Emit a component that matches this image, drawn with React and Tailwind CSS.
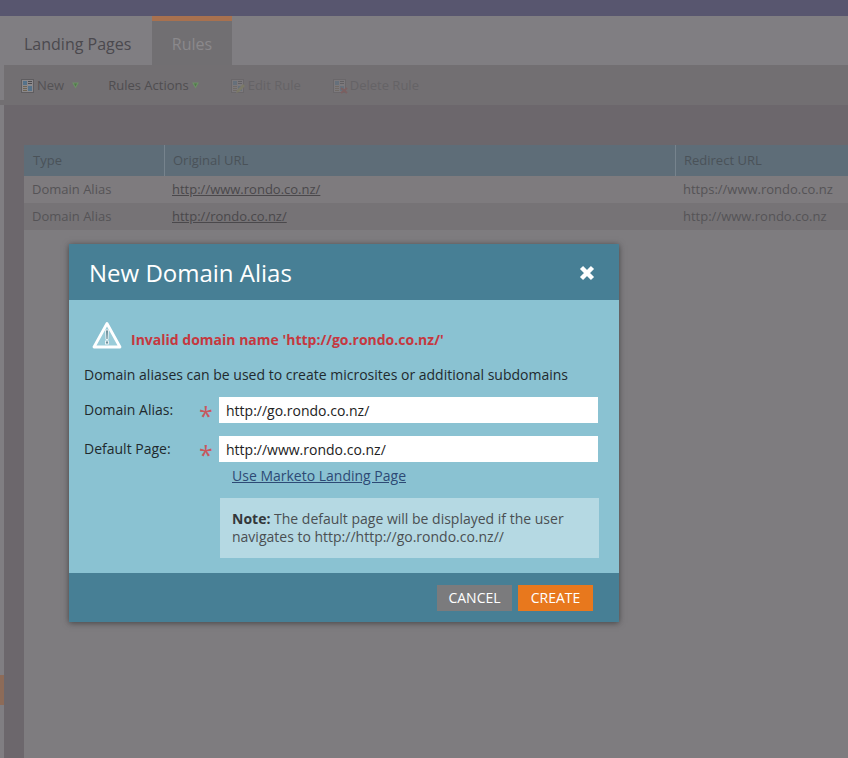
import React from 'react';

const font = { fontFamily: '"Open Sans", sans-serif' };

function DocIcon({ variant, dim }) {
  return (
    <svg width="15" height="16" viewBox="0 0 15 16" className={dim ? 'opacity-40' : ''}>
      <rect x="0.5" y="1.5" width="12" height="13" fill="#8b898c" stroke="#5f5d60" />
      <rect x="2" y="3" width="4" height="4" fill="#55728a" />
      <rect x="7" y="3" width="4" height="1" fill="#4c4a4d" />
      <rect x="7" y="5" width="4" height="1" fill="#4c4a4d" />
      <rect x="2" y="8" width="4" height="1" fill="#6f6452" />
      <rect x="2" y="10" width="4" height="1" fill="#6f6452" />
      <rect x="2" y="12" width="4" height="1" fill="#6f6452" />
      <rect x="7" y="8" width="4" height="5" fill="#55728a" />
      {variant === 'edit' && <path d="M5 15l1-3 6-6 2 2-6 6z" fill="#8a8a58" />}
      {variant === 'delete' && <path d="M8 10l6 5M14 10l-6 5" stroke="#8a4a4a" strokeWidth="2" />}
    </svg>
  );
}

function Caret() {
  return (
    <svg width="7" height="7" viewBox="0 0 7 7" className="shrink-0">
      <path d="M0 0.5h7L3.5 6.5z" fill="#6d8f66" />
      <path d="M2 1.5h3L3.5 4.5z" fill="#4f7a48" />
    </svg>
  );
}

function TableRow({ type, url, redirect, className }) {
  return (
    <div className={`grid grid-cols-[141px_510px_1fr] items-center text-[13px] text-[#555356] ${className}`}>
      <span className="pl-2">{type}</span>
      <a className="pl-[7px] underline text-[#4a484b]">{url}</a>
      <span className="pl-2">{redirect}</span>
    </div>
  );
}

function Field({ label, value }) {
  return (
    <div className="flex items-start h-[26px]">
      <label className="w-[114px] shrink-0 pt-[2px] text-[14px] leading-[22px] text-[#1f2a2e]">{label}</label>
      <span className="w-[21px] shrink-0 h-[26px] pt-[5px] pl-[1px] text-[25px] leading-[26px] text-[#c7585d]">*</span>
      <input
        readOnly
        value={value}
        className="w-[379px] h-[26px] bg-white px-[7px] text-[14px] text-[#222] outline-none"
        style={font}
      />
    </div>
  );
}

export default function App() {
  return (
    <div className="relative h-[758px] w-[848px] overflow-hidden flex flex-col bg-[#7e7c7f]" style={font}>
      <div className="h-4 shrink-0 bg-[#58566f]" />

      {/* Tabs */}
      <div className="h-[49px] shrink-0 flex pl-1 bg-[#807e82]">
        <div className="w-[148px] pl-5 pt-[7px] flex items-center text-[16px] text-[#4b494e]">Landing Pages</div>
        <div className="w-[80px] flex flex-col bg-[#716f72]">
          <div className="h-[5px] bg-[#a8714f]" />
          <div className="flex-1 flex items-center justify-center pt-[2px] text-[16px] text-[#8b898c]">Rules</div>
        </div>
      </div>

      {/* Toolbar */}
      <div className="h-[40px] shrink-0 flex">
        <div className="w-1 flex flex-col bg-[#807e82]">
          <div className="h-[35px]" />
          <div className="h-[5px] bg-[#726f72]" />
        </div>
        <div className="flex-1 flex items-center pl-[17px] pt-[1px] text-[13px] bg-[#726f72]">
          <DocIcon />
          <span className="ml-[1px] text-[#545255]">New</span>
          <span className="ml-2"><Caret /></span>
          <span className="ml-[29px] text-[#4f4d50]">Rules Actions</span>
          <span className="ml-[3px]"><Caret /></span>
          <span className="ml-[32px]"><DocIcon variant="edit" dim /></span>
          <span className="ml-[2px] text-[#656366]">Edit Rule</span>
          <span className="ml-[32px]"><DocIcon variant="delete" dim /></span>
          <span className="ml-[2px] text-[#656366]">Delete Rule</span>
        </div>
      </div>

      {/* Main area */}
      <div className="flex-1 flex">
        <div className="w-1 shrink-0 flex flex-col bg-[#807e82]">
          <div className="h-[570px]" />
          <div className="h-[30px] bg-[#8d6b58]" />
        </div>
        <div className="w-5 shrink-0 bg-[#6c676c]" />
        <div className="flex-1 flex flex-col">
          <div className="h-10 shrink-0 bg-[#6c676c]" />
          <div className="h-[31px] shrink-0 grid grid-cols-[141px_511px_1fr] items-center text-[13px] bg-[#5e6d78] text-[#4a5258]">
            <span className="pl-[9px] h-full flex items-center border-r border-[#76838d]">Type</span>
            <span className="pl-2 h-full flex items-center border-r border-[#76838d]">Original URL</span>
            <span className="pl-2">Redirect URL</span>
          </div>
          <TableRow type="Domain Alias" url="http://www.rondo.co.nz/" redirect="https://www.rondo.co.nz" className="h-[27px] bg-[#7e7b7e]" />
          <TableRow type="Domain Alias" url="http://rondo.co.nz/" redirect="http://www.rondo.co.nz" className="h-[27px] bg-[#767376]" />
        </div>
      </div>

      {/* Dialog */}
      <div className="absolute left-[69px] top-[244px] w-[550px] flex flex-col shadow-[0_1px_6px_rgba(30,30,30,0.6)]">
        <div className="h-[56px] flex items-center justify-between pl-[20px] pr-[24px] pt-[2px] bg-[#477f95]">
          <h2 className="text-[24px] text-white font-normal">New Domain Alias</h2>
          <svg width="16" height="16" viewBox="0 0 16 16">
            <path d="M2.5 2.5l11 11M13.5 2.5l-11 11" stroke="#fff" strokeWidth="4.4" />
          </svg>
        </div>

        <div className="h-[273px] flex flex-col pl-[15px] bg-[#8ac2d2]">
          <div className="flex items-center mt-[23px] ml-[8px] h-[28px]">
            <svg width="30" height="28" viewBox="0 0 30 28" className="shrink-0 mb-[4px]">
              <path d="M15 2.5L28 26H2z" fill="#9accd9" stroke="#fff" strokeWidth="2.8" strokeLinejoin="round" />
              <path d="M13.4 9h3.2l-.6 9.5h-2z" fill="#6f929d" stroke="#fff" strokeWidth="0.8" />
              <rect x="13.5" y="20" width="3" height="3" fill="#6f929d" stroke="#fff" strokeWidth="0.8" />
            </svg>
            <span className="ml-[9px] pt-[5px] text-[14px] font-bold text-[#c5383f]">Invalid domain name 'http://go.rondo.co.nz/'</span>
          </div>
          <p className="mt-[14px] text-[14px] leading-[20px] text-[#1f2a2e]">Domain aliases can be used to create microsites or additional subdomains</p>
          <div className="mt-[12px] flex flex-col gap-[13px]">
            <Field label="Domain Alias:" value="http://go.rondo.co.nz/" />
            <Field label="Default Page:" value="http://www.rondo.co.nz/" />
          </div>
          <a className="mt-[4px] ml-[148px] text-[14px] leading-[20px] underline text-[#2d4a75]">Use Marketo Landing Page</a>
          <div className="mt-[12px] ml-[136px] w-[379px] h-[60px] px-3 py-3 text-[14px] leading-[18px] bg-[#b5d9e3] text-[#4a4f52]">
            <b className="text-[#33383b]">Note:</b> The default page will be displayed if the user navigates to http://http://go.rondo.co.nz//
          </div>
        </div>

        <div className="h-[49px] flex justify-end gap-[6px] pt-[12px] pr-[26px] bg-[#477f95]">
          <button className="w-[75px] h-[26px] pb-[2px] text-[14px] text-white bg-[#7b7b7d]">CANCEL</button>
          <button className="w-[75px] h-[26px] pb-[2px] text-[14px] text-white bg-[#e8781d]">CREATE</button>
        </div>
      </div>
    </div>
  );
}
